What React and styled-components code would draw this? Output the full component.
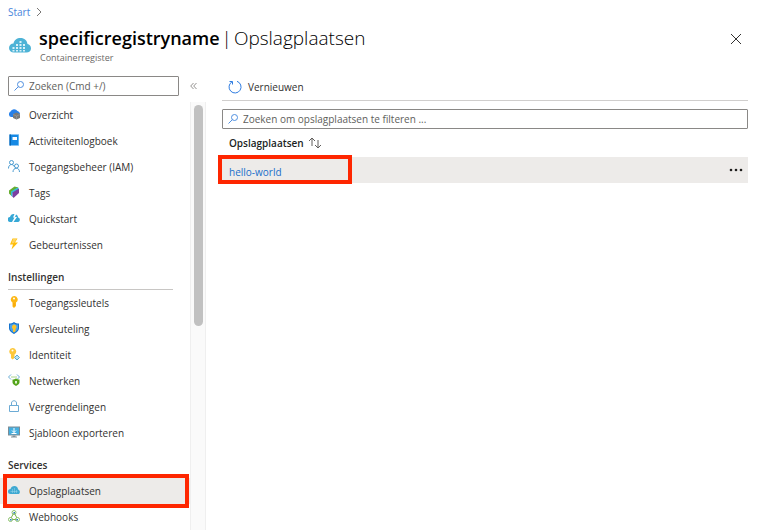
import React from "react";
import styled, { createGlobalStyle } from "styled-components";

const GlobalStyle = createGlobalStyle`
  *, *::before, *::after { box-sizing: border-box; }
  body { margin: 0; background: #fff; color: #323130; font: 10px/14px "Open Sans", "Noto Sans", sans-serif; }
  button, input { font: inherit; color: inherit; }
  a { text-decoration: none; }
`;

const Page = styled.div`
  display: flex;
  flex-direction: column;
  height: 100vh;
  overflow: hidden;
`;

const Breadcrumb = styled.nav`
  display: flex;
  align-items: center;
  gap: 6px;
  height: 24px;
  padding-left: 8px;
`;

const BreadcrumbLink = styled.a`
  color: #4a86dc;
`;

const Header = styled.header`
  display: flex;
  align-items: flex-start;
  gap: 8px;
  height: 50px;
  padding: 0 18px 0 9px;
`;

const HeaderIcon = styled.span`
  display: flex;
  padding-top: 14px;
`;

const Titles = styled.div`
  flex: 1;
  min-width: 0;
`;

const Title = styled.h1`
  display: flex;
  gap: 2px;
  margin: 0;
  color: #000;
  font-size: 18px;
  line-height: 28px;
  font-weight: 600;
  white-space: nowrap;
`;

const TitleSection = styled.span`
  font-size: 19px;
  font-weight: 300;
`;

const Subtitle = styled.p`
  margin: 0;
  padding-left: 1px;
  color: #6b6967;
  font-size: 9px;
  line-height: 12px;
`;

const IconButton = styled.button`
  display: flex;
  align-items: center;
  justify-content: center;
  padding: 0;
  border: 0;
  background: none;
  cursor: pointer;
`;

const CloseButton = styled(IconButton)`
  width: 12px;
  height: 30px;
`;

const Body = styled.div`
  display: flex;
  flex: 1;
  min-height: 0;
`;

const Sidebar = styled.aside`
  display: flex;
  flex-direction: column;
  flex: 0 0 206px;
`;

const SearchRow = styled.div`
  display: flex;
  align-items: center;
  gap: 11px;
  height: 28px;
  padding: 2px 8px 6px;
`;

const SearchField = styled.label`
  display: flex;
  align-items: center;
  gap: 4px;
  flex: ${(p) => (p.$compact ? "0 0 171px" : "0 0 auto")};
  height: 20px;
  padding: 0 4px;
  border: 1px solid #8a8886;
  border-radius: 1px;
  background: #fff;
`;

const SearchInput = styled.input`
  flex: 1;
  min-width: 0;
  padding: 0;
  border: 0;
  outline: 0;
  background: none;
  &::placeholder { color: #605e5c; opacity: 1; }
`;

const NavArea = styled.div`
  display: flex;
  flex: 1;
  min-height: 0;
`;

const Menu = styled.nav`
  flex: 1;
  min-width: 0;
`;

const MenuList = styled.ul`
  margin: 0;
  padding: 0;
  list-style: none;
`;

const MenuHeading = styled.h2`
  height: 32px;
  margin: 0 17px 0 8px;
  padding-top: 12px;
  border-bottom: 1px solid #c8c6c4;
  font-size: 10px;
  line-height: 14px;
  font-weight: 600;
`;

const MenuItem = styled.li`
  position: relative;
  background: ${(p) => (p.$selected ? "#edebe9" : "transparent")};
`;

const MenuLink = styled.a`
  display: flex;
  align-items: center;
  gap: 9px;
  height: 26px;
  padding-left: 8px;
  color: #323130;
  svg { flex: none; margin-bottom: 2px; }
`;

const Highlight = styled.span`
  position: absolute;
  inset: ${(p) => p.$inset};
  ${(p) => p.$width && `width: ${p.$width};`}
  border: 4px solid #fe2600;
  pointer-events: none;
`;

const ScrollTrack = styled.div`
  flex: 0 0 16px;
  padding: 3px 2px 0 3px;
  border: solid #efefef;
  border-width: 0 1px;
  background: #fafafa;
`;

const ScrollThumb = styled.div`
  width: 9px;
  height: 52%;
  border-radius: 5px;
  background: #c1c1c1;
`;

const Content = styled.main`
  flex: 1;
  min-width: 0;
  padding: 0 12px 0 16px;
`;

const Toolbar = styled.div`
  display: flex;
  align-items: center;
  height: 27px;
  margin-bottom: 8px;
  padding-left: 6px;
  border-bottom: 1px solid #d0cecd;
`;

const ToolbarButton = styled(IconButton)`
  gap: 6px;
`;

const Table = styled.table`
  width: 100%;
  border-collapse: collapse;
  table-layout: fixed;
`;

const HeadCell = styled.th`
  height: 28px;
  padding: 0 0 0 7px;
  color: #201f1e;
  font-weight: 600;
  text-align: left;
`;

const SortButton = styled(IconButton)`
  gap: 4px;
  font-weight: 600;
`;

const Cell = styled.td`
  position: relative;
  height: 26px;
  padding: 4px 0 0 7px;
  background: #edebe9;
`;

const ActionCell = styled.td`
  width: 20px;
  height: 26px;
  padding: 0;
  background: #edebe9;
`;

const ActionHead = styled.th`
  width: 20px;
  padding: 0;
`;

const RepositoryLink = styled.a`
  color: #1a6fc9;
`;

const MoreButton = styled(IconButton)`
  width: 16px;
  height: 22px;
`;

const Icon = ({ size = 12, children }) => (
  <svg width={size} height={size} viewBox="0 0 24 24" fill="none" aria-hidden="true">
    {children}
  </svg>
);

const SearchIcon = () => (
  <Icon>
    <circle cx="15" cy="9" r="6" stroke="#4f8fe0" strokeWidth="2" />
    <path d="M11 13 3 21" stroke="#4f8fe0" strokeWidth="2" />
  </Icon>
);

const RegistryIcon = ({ width = 22, height = 15 }) => (
  <svg width={width} height={height} viewBox="0 0 44 30" aria-hidden="true">
    <path d="M10 29C4 29 0 25 0 20c0-5 4-9 9-9C10 4 16 0 23 0c8 0 13 5 14 12 4 1 7 4 7 9 0 5-4 8-9 8Z" fill="#4eb3d6" />
    <path d="M14 12h4v4h-4zM21 12h4v4h-4zM21 6h4v4h-4zM28 12h4v4h-4zM7 18h4v4H7zM14 18h4v4h-4zM21 18h4v4h-4zM28 18h4v4h-4zM7 24h4v3H7zM14 24h4v3h-4zM21 24h4v3h-4zM28 24h4v3h-4z" fill="#d8f0f8" />
  </svg>
);

const CollapseIcon = () => (
  <svg width="7" height="8" viewBox="0 0 7 8" fill="none" stroke="#797775" aria-hidden="true">
    <path d="M3.5 1 .7 4l2.8 3M6.5 1 3.7 4l2.8 3" strokeWidth=".8" />
  </svg>
);

const person = "#4b9bd0";

const icons = {
  overview: (
    <Icon>
      <path d="M6 18a6 6 0 0 1-1-11 8 8 0 0 1 14-1c3 1 5 3 5 6s-2 6-5 6Z" fill="#2680ea" />
      <path d="m17 9 7 3v8l-7 3-7-3v-8Z" fill="#77797b" />
      <path d="m10 13 7 3 7-3M17 16v7" stroke="#a4a6a8" strokeWidth="1" />
    </Icon>
  ),
  log: (
    <Icon>
      <path d="M3 1h18v22H3z" fill="#1689e4" />
      <path d="M3 1h3v22H3z" fill="#0867b5" />
      <path d="M9 6h9v6H9z" fill="#fff" />
      <path d="M20 1h2v22h-2z" fill="#5fb6f2" />
    </Icon>
  ),
  access: (
    <Icon>
      <circle cx="7" cy="5" r="4" stroke={person} strokeWidth="2" />
      <path d="M1 17c0-10 10-10 12-3" stroke={person} strokeWidth="2" />
      <circle cx="17" cy="12" r="4" stroke={person} strokeWidth="2" />
      <path d="M10 24c0-10 13-10 13 0" stroke={person} strokeWidth="2" />
    </Icon>
  ),
  tags: (
    <Icon>
      <path d="M2 9 13 1l8 2-14 9v8l-5-5Z" fill="#66ad2e" />
      <path d="m6 11 13-8 2 1v4L9 15v7l-3-3Z" fill="#35bdd3" />
      <path d="m9 13 13-8v9L11 24l-2-3Z" fill="#7b3fa0" />
    </Icon>
  ),
  quickstart: (
    <Icon>
      <path d="M5 20a5 5 0 0 1-1-10 8 8 0 0 1 9-6l-3 7h3l-5 9ZM16 5c3 1 4 3 4 6 5 0 5 9 0 9h-9l7-10h-4Z" fill="#36a8d6" />
    </Icon>
  ),
  events: (
    <Icon>
      <path d="M9 1h10l-5 8h6L7 23l3-10H4Z" fill="#ffbd08" />
      <path d="M10 2h7l-5 8-5 1Z" fill="#ffd45c" />
    </Icon>
  ),
  keys: (
    <Icon>
      <path d="M12 0a7 7 0 0 1 4 13v7l-4 4-3-3v-8A7 7 0 0 1 12 0Z" fill="#fdb714" />
      <circle cx="12" cy="5" r="2" fill="#fff" />
      <path d="M12 14v7" stroke="#e48a00" strokeWidth="1" />
    </Icon>
  ),
  encryption: (
    <Icon>
      <path d="M12 0c3 3 6 3 10 3v9c0 6-5 9-10 12C7 21 2 18 2 12V3c4 0 7 0 10-3Z" fill="#1473ce" />
      <path d="M12 3c3 2 5 2 8 2v7c0 4-4 7-8 9-4-2-8-5-8-9V5c3 0 5 0 8-2Z" fill="#4ca3eb" />
      <path d="M12 5a5 5 0 0 1 3 9v4l-3 3-2-2v-5a5 5 0 0 1 2-9Z" fill="#ffc328" />
    </Icon>
  ),
  identity: (
    <Icon>
      <path d="M9 0a7 7 0 0 1 4 13v7l-4 3-3-3v-7A7 7 0 0 1 9 0Z" fill="#fcc83c" />
      <circle cx="9" cy="5" r="2" fill="#fff" />
      <path d="m18 14 5 5-5 5-5-5Z" fill="#b9e2f6" stroke="#58a9d0" strokeWidth="2" />
    </Icon>
  ),
  network: (
    <Icon>
      <path d="m6 1-5 5 5 5M18 1l5 5-5 5" stroke="#6badd4" strokeWidth="2" />
      <path d="M7 6h2M11 6h2M15 6h2" stroke="#55a51c" strokeWidth="2" />
      <path d="M16 9c2 1 4 2 7 2v6c0 3-4 5-7 7-3-2-7-4-7-7v-6c3 0 5-1 7-2Z" fill="#55a51c" />
      <path d="M14 14h4v5h-4z" fill="#e0f3d0" />
    </Icon>
  ),
  lock: (
    <Icon>
      <path d="M3 11h18v12H3zM7 11V6c0-6 10-6 10 0v5" stroke="#6cabd5" strokeWidth="2" />
    </Icon>
  ),
  exportTemplate: (
    <Icon>
      <path d="M0 1h24v18H0z" fill="#7c8c95" />
      <path d="M2 3h20v14H2z" fill="#45afe0" />
      <path d="M12 4v9M8 9l4 4 4-4M7 15h10" stroke="#fff" strokeWidth="2" />
      <path d="M9 19h6v2h3v2H6v-2h3Z" fill="#85929a" />
    </Icon>
  ),
  repositories: (
    <Icon>
      <path d="M5 20a5 5 0 0 1 0-10c1-4 4-6 8-6s7 3 7 7c5 1 5 9 0 9Z" fill="#3fa9d2" />
      <path d="M9 10v8M13 8v10M17 12v6M5 15h14" stroke="#9bd5eb" strokeWidth="1" />
    </Icon>
  ),
  webhooks: (
    <Icon>
      <path d="m11 7-5 9M13 7l5 9M8 19h9" stroke="#77b64a" strokeWidth="2" />
      <circle cx="12" cy="5" r="4" stroke="#8bc06a" strokeWidth="2" />
      <circle cx="5" cy="19" r="4" stroke="#8bc06a" strokeWidth="2" />
      <circle cx="19" cy="19" r="4" stroke="#8bc06a" strokeWidth="2" />
      <path d="M11 4h3v3h-3zM4 18h3v3H4zM17 18h3v3h-3z" fill="#287bba" />
    </Icon>
  ),
};

const sections = [
  {
    items: [
      ["overview", "Overzicht"],
      ["log", "Activiteitenlogboek"],
      ["access", "Toegangsbeheer (IAM)"],
      ["tags", "Tags"],
      ["quickstart", "Quickstart"],
      ["events", "Gebeurtenissen"],
    ],
  },
  {
    heading: "Instellingen",
    items: [
      ["keys", "Toegangssleutels"],
      ["encryption", "Versleuteling"],
      ["identity", "Identiteit"],
      ["network", "Netwerken"],
      ["lock", "Vergrendelingen"],
      ["exportTemplate", "Sjabloon exporteren"],
    ],
  },
  {
    heading: "Services",
    items: [
      ["repositories", "Opslagplaatsen"],
      ["webhooks", "Webhooks"],
    ],
  },
];

const SELECTED = "repositories";

function MenuSection({ heading, items }) {
  return (
    <section>
      {heading && <MenuHeading>{heading}</MenuHeading>}
      <MenuList>
        {items.map(([id, label]) => (
          <MenuItem key={id} $selected={id === SELECTED}>
            <MenuLink href={`#${id}`} aria-current={id === SELECTED ? "page" : undefined}>
              {icons[id]}
              {label}
            </MenuLink>
            {id === SELECTED && <Highlight $inset="-4px 1px -4px 3px" />}
          </MenuItem>
        ))}
      </MenuList>
    </section>
  );
}

export default function App() {
  return (
    <Page>
      <GlobalStyle />
      <Breadcrumb aria-label="Breadcrumb">
        <BreadcrumbLink href="#start">Start</BreadcrumbLink>
        <svg width="6" height="10" viewBox="0 0 6 10" fill="none" stroke="#797775" aria-hidden="true">
          <path d="m1 1 4 4-4 4" />
        </svg>
      </Breadcrumb>
      <Header>
        <HeaderIcon>
          <RegistryIcon />
        </HeaderIcon>
        <Titles>
          <Title>
            <span>specificregistryname</span>
            <TitleSection>|</TitleSection>
            <TitleSection>Opslagplaatsen</TitleSection>
          </Title>
          <Subtitle>Containerregister</Subtitle>
        </Titles>
        <CloseButton type="button" aria-label="Sluiten">
          <svg width="12" height="12" viewBox="0 0 12 12" stroke="#323130" aria-hidden="true">
            <path d="m1 1 10 10M11 1 1 11" />
          </svg>
        </CloseButton>
      </Header>
      <Body>
        <Sidebar>
          <SearchRow>
            <SearchField $compact>
              <SearchIcon />
              <SearchInput type="search" aria-label="Zoeken" placeholder="Zoeken (Cmd +/)" />
            </SearchField>
            <IconButton type="button" aria-label="Menu samenvouwen">
              <CollapseIcon />
            </IconButton>
          </SearchRow>
          <NavArea>
            <Menu aria-label="Containerregister">
              {sections.map((section, index) => (
                <MenuSection key={index} {...section} />
              ))}
            </Menu>
            <ScrollTrack>
              <ScrollThumb />
            </ScrollTrack>
          </NavArea>
        </Sidebar>
        <Content>
          <Toolbar>
            <ToolbarButton type="button">
              <svg width="14" height="14" viewBox="0 0 14 14" fill="none" stroke="#2f7de1" aria-hidden="true">
                <path d="M9 1.3a6 6 0 1 1-5 .5M1.5 1.5h3v3" />
              </svg>
              Vernieuwen
            </ToolbarButton>
          </Toolbar>
          <SearchField>
            <SearchIcon />
            <SearchInput
              type="search"
              aria-label="Opslagplaatsen filteren"
              placeholder="Zoeken om opslagplaatsen te filteren ..."
            />
          </SearchField>
          <Table>
            <thead>
              <tr>
                <HeadCell scope="col">
                  <SortButton type="button">
                    Opslagplaatsen
                    <svg width="14" height="12" viewBox="0 0 14 12" fill="none" stroke="#605e5c" aria-hidden="true">
                      <path d="M4 9V1M1 4l3-3 3 3M10 3v8M7 8l3 3 3-3" />
                    </svg>
                  </SortButton>
                </HeadCell>
                <ActionHead />
              </tr>
            </thead>
            <tbody>
              <tr>
                <Cell>
                  <RepositoryLink href="#hello-world">hello-world</RepositoryLink>
                  <Highlight $inset="-2px auto -1px -4px" $width="134px" />
                </Cell>
                <ActionCell>
                  <MoreButton type="button" aria-label="Meer acties">
                    <svg width="14" height="4" viewBox="0 0 14 4" fill="#201f1e" aria-hidden="true">
                      <circle cx="2" cy="2" r="1.3" />
                      <circle cx="7" cy="2" r="1.3" />
                      <circle cx="12" cy="2" r="1.3" />
                    </svg>
                  </MoreButton>
                </ActionCell>
              </tr>
            </tbody>
          </Table>
        </Content>
      </Body>
    </Page>
  );
}
